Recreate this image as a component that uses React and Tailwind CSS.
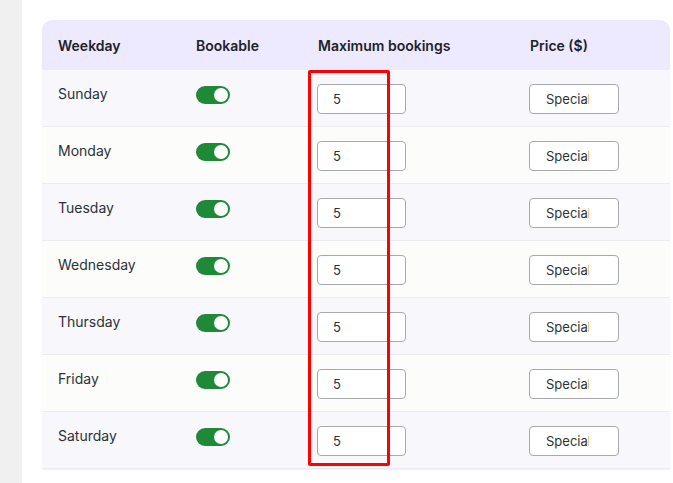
const days = ["Sunday", "Monday", "Tuesday", "Wednesday", "Thursday", "Friday", "Saturday"];

const Toggle = () => (
  <div className="mt-[2px] flex h-[18px] w-[34px] items-center justify-end rounded-full bg-[#1e8a38] pr-[2px]">
    <div className="h-[14px] w-[14px] rounded-full bg-white" />
  </div>
);

const App = () => {
  return (
    <div className="flex min-h-[483px] font-['Inter',sans-serif]">
      <div className="w-[22px] bg-[#f0f0f1]" />
      <div className="flex-1 bg-white pl-[20px] pr-[3px] pt-[20px]">
        <div className="relative overflow-hidden rounded-t-[10px] shadow-[0_1px_2px_rgba(0,0,0,0.06)]">
          <div className="grid h-[50px] grid-cols-[138px_122px_212px_1fr] items-center bg-[#ede9fe] pl-4 text-[14px] font-semibold text-[#1d2327]">
            <span>Weekday</span>
            <span>Bookable</span>
            <span>Maximum bookings</span>
            <span>Price ($)</span>
          </div>
          {days.map((day, i) => (
            <div
              key={day}
              className={
                "grid h-[57px] grid-cols-[138px_122px_212px_1fr] items-start border-b border-[#ececf0] pl-4 pt-[14px] " +
                (i % 2 === 0 ? "bg-[#f7f7fc]" : "bg-[#fcfcfa]")
              }
            >
              <span className="text-[14px] leading-[20px] text-[#2c3338]">{day}</span>
              <Toggle />
              <input
                readOnly
                value="5"
                className="-ml-px h-[30px] w-[89px] rounded-[4px] border border-[#a7aaad] bg-white pl-[15px] text-[13px] text-[#2c3338] outline-none"
              />
              <input
                readOnly
                value="Special price"
                className="-ml-px h-[30px] w-[90px] rounded-[4px] border border-[#a7aaad] bg-white pl-[16px] pr-[29px] text-[13px] text-[#2c3338] outline-none"
              />
            </div>
          ))}
          <div className="pointer-events-none absolute left-[266px] top-[50px] h-[396px] w-[82px] rounded-[2px] border-[3px] border-[#f00]" />
        </div>
      </div>
    </div>
  );
};

export default App;
